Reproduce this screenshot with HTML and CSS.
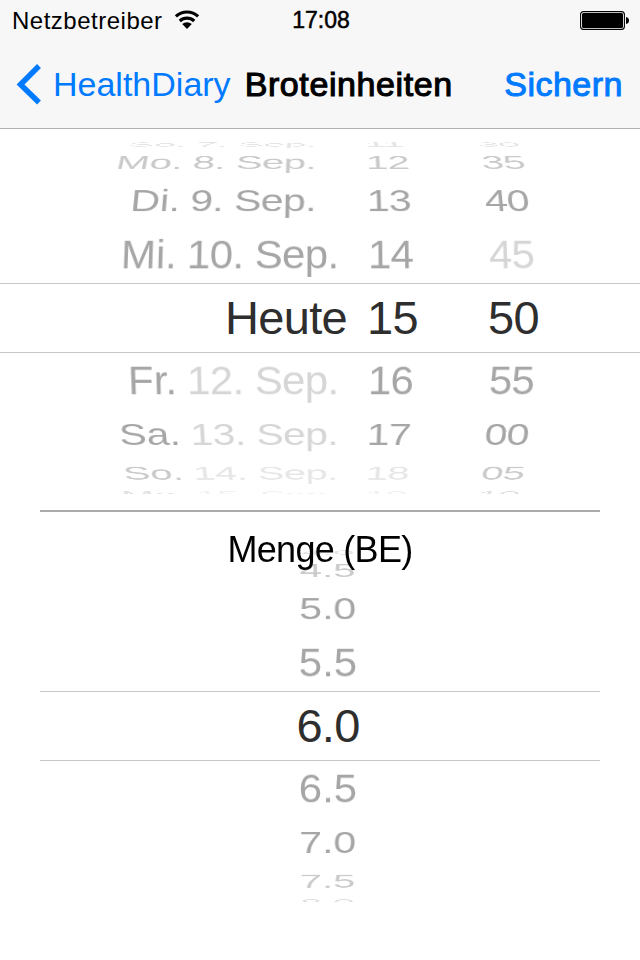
FILE: index.html
```html
<!DOCTYPE html>
<html lang="de">
<head>
    <meta charset="UTF-8">
    <meta name="viewport" content="width=device-width, initial-scale=1.0">
    <title>Broteinheiten</title>
    <link rel="stylesheet" href="styles.css">
</head>
<body>

<header class="header">
    <div class="status">
        <div class="carrier">
            <span>Netzbetreiber</span>
            <svg class="wifi" width="26" height="20" viewBox="0 0 26 20">
                <path d="M1.9 6.4a16.2 16.2 0 0 1 22.2 0M5.8 11a10.7 10.7 0 0 1 14.4 0" fill="none" stroke="#000" stroke-width="3.2"/>
                <path d="M8.2 14a7.1 7.1 0 0 1 9.6 0l-4.8 4.9z"/>
            </svg>
        </div>
        <span class="time">17:08</span>
        <svg class="battery" width="50" height="20" viewBox="0 0 50 20">
            <rect x=".6" y=".6" width="43.8" height="17.8" rx="3" fill="#fff" stroke="#000" stroke-width="1.1"/>
            <rect x="2" y="2" width="41" height="15" rx="1.5"/>
            <path d="M46 6q3 .5 3 3.5t-3 3.5z"/>
        </svg>
    </div>
    <nav class="nav">
        <a class="back">
            <svg width="26" height="42" viewBox="0 0 26 42">
                <path d="M23 3L4.500 21.500l18.500 18" fill="none" stroke="#007aff" stroke-width="5.5"/>
            </svg>
            <span>HealthDiary</span>
        </a>
        <h1 class="title">Broteinheiten</h1>
        <a class="save">Sichern</a>
    </nav>
</header>

<main>
    <div class="wheel">
        <div class="row up4"><span class="day">So.</span><span>7. Sep.</span><span>11</span><span>30</span></div>
        <div class="row up3"><span class="day">Mo.</span><span>8. Sep.</span><span>12</span><span>35</span></div>
        <div class="row up2"><span class="day">Di.</span><span>9. Sep.</span><span>13</span><span>40</span></div>
        <div class="row up1"><span class="day">Mi.</span><span>10. Sep.</span><span>14</span><span class="off">45</span></div>
        <div class="row selected"><span class="today">Heute</span><span>15</span><span>50</span></div>
        <div class="row down1"><span class="day">Fr.</span><span class="off">12. Sep.</span><span>16</span><span>55</span></div>
        <div class="row down2"><span class="day">Sa.</span><span class="off">13. Sep.</span><span>17</span><span>00</span></div>
        <div class="row down3"><span class="day">So.</span><span class="off">14. Sep.</span><span class="off">18</span><span>05</span></div>
        <div class="row down4"><span class="day">Mo.</span><span class="off">15. Sep.</span><span class="off">19</span><span>10</span></div>
    </div>

    <section class="amount">
        <h2 class="label">Menge (BE)</h2>
        <div class="wheel single">
            <div class="row up4"><span>4.0</span></div>
            <div class="row up3"><span>4.5</span></div>
            <div class="row up2"><span>5.0</span></div>
            <div class="row up1"><span>5.5</span></div>
            <div class="row selected"><span>6.0</span></div>
            <div class="row down1"><span>6.5</span></div>
            <div class="row down2"><span>7.0</span></div>
            <div class="row down3"><span>7.5</span></div>
            <div class="row down4"><span>8.0</span></div>
        </div>
    </section>
</main>

</body>
</html>
```
FILE: styles.css
```css
* {
    box-sizing: border-box;
}
body {
    margin: 0;
    width: 640px;
    height: 960px;
    overflow: hidden;
    background-color: #fff;
    font-family: "Liberation Sans", Arial, sans-serif;
}
.header {
    height: 129px;
    background-color: #f7f7f7;
    border-bottom: 1px solid #b2b2b2;
}
.status {
    display: grid;
    grid-template-columns: 1fr auto 1fr;
    align-items: center;
    height: 40px;
    padding: 1px 10px 0 12px;
    font-size: 24px;
}
.carrier {
    display: flex;
    align-items: center;
    gap: 11px;
    letter-spacing: 0.5px;
}
.wifi {
    margin-top: -1px;
}
.time {
    font-size: 23px;
    -webkit-text-stroke: 0.5px #000;
}
.battery {
    justify-self: end;
}
.nav {
    display: flex;
    align-items: center;
    height: 88px;
    padding: 0 17px 0 16px;
    font-size: 34px;
}
.back {
    display: flex;
    align-items: center;
    gap: 11px;
    color: #007aff;
}
.title {
    margin: 0 auto 0 14px;
    font-size: 34px;
    font-weight: normal;
    letter-spacing: 0.6px;
    -webkit-text-stroke: 1.1px #000;
}
.save {
    color: #007aff;
    letter-spacing: 0.5px;
    -webkit-text-stroke: 1px #007aff;
}

/* date and time wheel */
.wheel {
    height: 353px;
    margin-top: 12px;
    overflow: hidden;
}
.row {
    display: grid;
    grid-template-columns: 177px 178px 121px 1fr;
    width: 640px;
    font-size: 42px;
    color: #a6a6a6;
    white-space: nowrap;
}
.row span:nth-child(2) {
    padding-left: 10px;
    letter-spacing: -0.6px;
}
.row span:nth-child(3),
.row span:nth-child(4) {
    padding-left: 13px;
    letter-spacing: -0.8px;
}
.row .day {
    text-align: right;
}
.row .off {
    color: #d6d6d6;
}
.row.selected {
    grid-template-columns: 355px 121px 1fr;
    height: 70px;
    line-height: 67px;
    border-top: 1px solid #c8c8c8;
    border-bottom: 1px solid #c8c8c8;
    font-size: 47px;
    color: #2e2e2e;
}
.row.selected span {
    padding-left: 12px;
    letter-spacing: -0.7px;
}
.row.selected .today {
    padding-right: 8px;
    text-align: right;
}
.up1 {
    height: 56px;
    line-height: 56px;
    transform: perspective(1700px) rotateX(18deg);
}
.up2 {
    height: 52px;
    line-height: 52px;
    transform: perspective(1700px) rotateX(42deg) scale(0.975);
}
.up3 {
    height: 27px;
    line-height: 32px;
    transform: perspective(1700px) rotateX(62deg) scale(0.955);
    opacity: 0.6;
}
.up4 {
    height: 7px;
    line-height: 7px;
    transform: perspective(1700px) rotateX(81deg) scale(0.93);
    opacity: 0.3;
}
.down1 {
    height: 56px;
    line-height: 56px;
    transform: perspective(1700px) rotateX(-18deg);
}
.down2 {
    height: 51px;
    line-height: 51px;
    transform: perspective(1700px) rotateX(-42deg) scale(0.975);
}
.down3 {
    height: 26px;
    line-height: 27px;
    transform: perspective(1700px) rotateX(-62deg) scale(0.955);
    opacity: 0.6;
}
.down4 {
    height: 17px;
    line-height: 17px;
    transform: perspective(1700px) rotateX(-76deg) scale(0.93);
    opacity: 0.35;
}

/* amount wheel */
.amount {
    width: 560px;
    margin: 16px auto 0;
    border-top: 2px solid #aaa;
}
.label {
    position: relative;
    z-index: 1;
    height: 76px;
    margin: 0 0 -39px;
    line-height: 76px;
    font-size: 36px;
    font-weight: normal;
    letter-spacing: -0.7px;
    text-align: center;
}
.single {
    margin-top: 0;
}
.single .row,
.single .row.selected {
    display: block;
    width: 560px;
    padding-left: 16px;
    text-align: center;
}
.single .row.selected span {
    padding: 0;
}
```
